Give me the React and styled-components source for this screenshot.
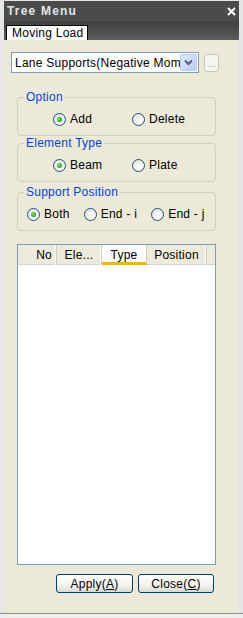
import React from "react";
import styled, { createGlobalStyle } from "styled-components";

const Global = createGlobalStyle`
  html, body { margin: 0; padding: 0; background: #ffffff; }
  * { box-sizing: border-box; }
`;

const Frame = styled.div`
  width: 243px;
  height: 618px;
  background: #e6e6e6;
  padding: 1px 4px 5px 4px;
  display: flex;
  flex-direction: column;
  box-shadow: inset 0 -4px 0 #ededed, inset 0 -5px 0 #8c8c8c;
  font-family: "Liberation Sans", Arial, sans-serif;
  font-size: 12px;
  letter-spacing: 0.25px;
  color: #000;
`;

const TitleBar = styled.div`
  height: 20px;
  background: #4b4b4b;
  display: flex;
  align-items: center;
  justify-content: space-between;
  padding: 0 3px 0 3px;
`;

const Title = styled.span`
  font-weight: bold;
  font-size: 12px;
  letter-spacing: 1.2px;
  color: #e4e4e4;
`;

const TabStrip = styled.div`
  height: 19px;
  background: linear-gradient(#3f3f3f, #505050 60%, #5e5e5e);
  display: flex;
  align-items: flex-end;
  padding-left: 2px;
`;

const Tab = styled.div`
  height: 15px;
  background: #ffffff;
  border: 1px solid #000;
  border-bottom: none;
  padding: 0 4px 0 5px;
  line-height: 14px;
  font-size: 12px;
`;

const Content = styled.div`
  flex: 1;
  background: #ece9d8;
  padding: 12px 0 0 7px;
  display: flex;
  flex-direction: column;
`;

const ComboRow = styled.div`
  display: flex;
  align-items: center;
  gap: 5px;
`;

const Combo = styled.div`
  width: 188px;
  height: 21px;
  background: #fff;
  border: 1px solid #7f9db9;
  display: flex;
  align-items: center;
  padding: 0 1px 0 3px;
`;

const ComboText = styled.span`
  flex: 1;
  white-space: nowrap;
  overflow: hidden;
  font-size: 12px;
`;

const DropBtn = styled.div`
  width: 17px;
  height: 17px;
  border: 1px solid #b9ccf5;
  border-radius: 2px;
  background: linear-gradient(135deg, #dfe8fd, #bccdf7);
  display: flex;
  align-items: center;
  justify-content: center;
  flex: none;
`;

const EllipsisBtn = styled.div`
  width: 15px;
  height: 18px;
  border: 1px solid #cbc7b8;
  border-radius: 3px;
  background: #f5f4ee;
  color: #b3af9f;
  font-size: 10px;
  letter-spacing: 0;
  display: flex;
  align-items: flex-end;
  justify-content: center;
  line-height: 12px;
  padding-bottom: 1px;
`;

const Group = styled.fieldset`
  margin: ${(p) => p.$top}px 0 0 6px;
  width: 199px;
  border: 1px solid #d0d0bf;
  border-radius: 4px;
  padding: 8px 0 9px 0;
  min-width: 0;
`;

const Legend = styled.legend`
  color: #0046d5;
  font-size: 12px;
  line-height: 14px;
  padding: 0 2px;
  margin-left: 6px;
`;

const RadioRow = styled.div`
  display: ${(p) => (p.$grid ? "grid" : "flex")};
  grid-template-columns: 79px auto;
  gap: ${(p) => (p.$grid ? 0 : 14)}px;
  padding-left: ${(p) => p.$pad}px;
  align-items: center;
  height: 14px;
`;

const RadioItem = styled.label`
  display: flex;
  align-items: center;
  gap: 4px;
  white-space: nowrap;
  font-size: 12px;
`;

const RadioDot = styled.span`
  width: 13px;
  height: 13px;
  border-radius: 50%;
  border: 1px solid #1c5180;
  background: radial-gradient(circle at 65% 65%, #ffffff 0%, #f3f2ee 40%, #dcdad2 100%);
  display: flex;
  align-items: center;
  justify-content: center;
  flex: none;
  &::after {
    content: "";
    display: ${(p) => (p.$checked ? "block" : "none")};
    width: 5px;
    height: 5px;
    border-radius: 50%;
    background: radial-gradient(circle at 40% 40%, #7be57b, #21a121 70%);
  }
`;

const List = styled.div`
  margin: 13px 0 0 6px;
  width: 199px;
  height: 321px;
  border: 1px solid #7f9db9;
  background: #fff;
`;

const Header = styled.div`
  display: grid;
  grid-template-columns: 39px 45px 45px 60px 1fr;
  height: 20px;
  background: #ebeadb;
  border-bottom: 1px solid #d6d3c6;
`;

const HeadCell = styled.div`
  display: flex;
  align-items: center;
  justify-content: ${(p) => (p.$right ? "flex-end" : "center")};
  padding-right: ${(p) => (p.$right ? 4 : 0)}px;
  font-size: 12px;
  background: ${(p) => (p.$active ? "#fcfcfe" : "transparent")};
  border-bottom: ${(p) => (p.$active ? "3px solid #f6b11e" : "none")};
  border-right: ${(p) => (p.$last ? "none" : "1px solid #d0cebf")};
  box-shadow: ${(p) => (p.$last ? "none" : "inset -1px 0 0 #ffffff")};
  padding-top: ${(p) => (p.$active ? 3 : 0)}px;
`;

const ButtonRow = styled.div`
  display: flex;
  gap: 5px;
  margin: 9px 0 0 45px;
`;

const Button = styled.button`
  width: ${(p) => p.$w}px;
  height: 19px;
  border: 1px solid #003c74;
  border-radius: 3px;
  background: linear-gradient(#ffffff, #f4f3ee 60%, #dcd8cc);
  font-family: "Liberation Sans", Arial, sans-serif;
  font-size: 12px;
  letter-spacing: 0.25px;
  color: #000;
  padding: 0;
  line-height: 16px;
  u { text-decoration: underline; }
`;

function Radio({ checked, children }) {
  return (
    <RadioItem>
      <RadioDot $checked={checked} />
      <span>{children}</span>
    </RadioItem>
  );
}

export default function App() {
  return (
    <>
      <Global />
      <Frame>
        <TitleBar>
          <Title>Tree Menu</Title>
          <svg width="9" height="9" viewBox="0 0 9 9">
            <path d="M1 1 L8 8 M8 1 L1 8" stroke="#ffffff" strokeWidth="2" />
          </svg>
        </TitleBar>
        <TabStrip>
          <Tab>Moving Load</Tab>
        </TabStrip>
        <Content>
          <ComboRow>
            <Combo>
              <ComboText>Lane Supports(Negative Moment)</ComboText>
              <DropBtn>
                <svg width="9" height="7" viewBox="0 0 9 7">
                  <path d="M1 1.5 L4.5 5 L8 1.5" fill="none" stroke="#4d6185" strokeWidth="2" />
                </svg>
              </DropBtn>
            </Combo>
            <EllipsisBtn>...</EllipsisBtn>
          </ComboRow>

          <Group $top={17}>
            <Legend>Option</Legend>
            <RadioRow $grid $pad={35}>
              <Radio checked>Add</Radio>
              <Radio>Delete</Radio>
            </RadioRow>
          </Group>

          <Group $top={0}>
            <Legend>Element Type</Legend>
            <RadioRow $grid $pad={35}>
              <Radio checked>Beam</Radio>
              <Radio>Plate</Radio>
            </RadioRow>
          </Group>

          <Group $top={3}>
            <Legend>Support Position</Legend>
            <RadioRow $pad={9}>
              <Radio checked>Both</Radio>
              <Radio>End - i</Radio>
              <Radio>End - j</Radio>
            </RadioRow>
          </Group>

          <List>
            <Header>
              <HeadCell $right>No</HeadCell>
              <HeadCell>Ele...</HeadCell>
              <HeadCell $active>Type</HeadCell>
              <HeadCell>Position</HeadCell>
              <HeadCell $last />
            </Header>
          </List>

          <ButtonRow>
            <Button $w={77}>
              Apply(<u>A</u>)
            </Button>
            <Button $w={76}>
              Close(<u>C</u>)
            </Button>
          </ButtonRow>
        </Content>
      </Frame>
    </>
  );
}
